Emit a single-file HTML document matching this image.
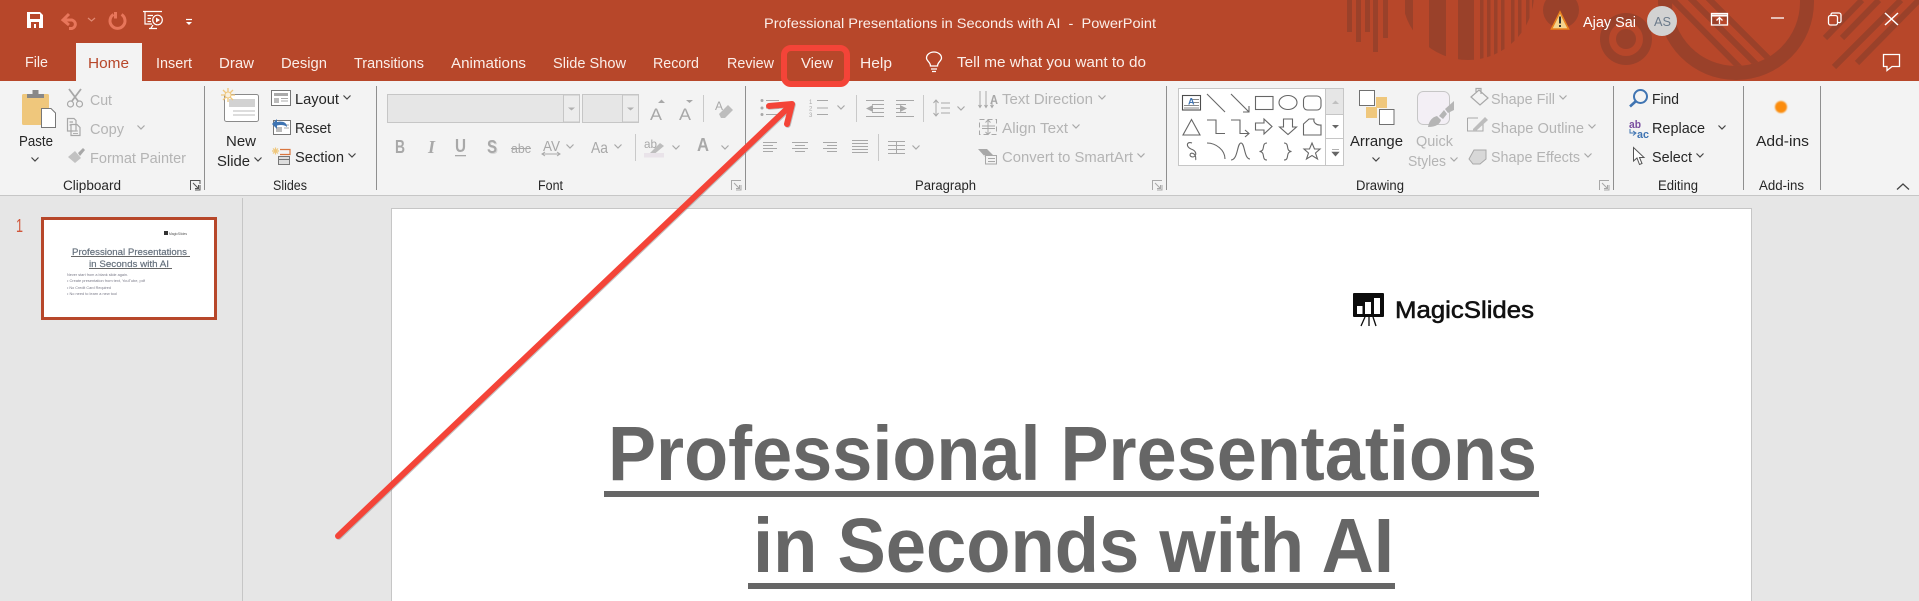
<!DOCTYPE html>
<html><head><meta charset="utf-8"><title>Professional Presentations in Seconds with AI - PowerPoint</title>
<style>
html,body{margin:0;padding:0;background:#e6e6e6;overflow:hidden}
svg{display:block}
text{font-family:"Liberation Sans",sans-serif;white-space:pre}
.t{font-size:14.5px;fill:#262626}
.w{font-size:14.5px;fill:#fbeee9}
.g{font-size:14.5px;fill:#b4b4b4}
.l{font-size:13.5px;fill:#262626}
.ch{fill:none;stroke:#444;stroke-width:1.2}
.cg{fill:none;stroke:#a8a8a8;stroke-width:1.2}
.ic{fill:none;stroke:#a8a8a8;stroke-width:1.2}
.sh{fill:none;stroke:#666;stroke-width:1.1}
</style></head><body>
<svg xmlns="http://www.w3.org/2000/svg" width="1919" height="601" viewBox="0 0 1919 601">
<defs>
<path id="c" d="M-3.5 -1.5L0 2L3.5 -1.5"/>
<clipPath id="top"><rect x="0" y="0" width="1919" height="81"/></clipPath>
<clipPath id="disc"><circle cx="1468" cy="-6" r="66"/></clipPath>
<clipPath id="ringIn"><circle cx="1736" cy="2" r="64"/></clipPath>
<filter id="soft" x="-50%" y="-50%" width="200%" height="200%"><feGaussianBlur stdDeviation="0.8"/></filter>
<g id="lau"><path d="M0.5 10V0.5H10M10 5V10H5M3 3L8.500 8.500M8.500 5V8.500H5" fill="none" stroke="#a8a8a8" stroke-width="1"/></g>
<g id="lad"><path d="M0.500 10V0.500H10V4M10 5V10H5M3 3L8.500 8.500M8.500 5V8.500H5" fill="none" stroke="#555" stroke-width="1"/></g>
</defs>

<!-- backgrounds -->
<rect width="1919" height="601" fill="#e6e6e6"/>
<rect width="1919" height="81" fill="#b7472a"/>
<rect y="81" width="1919" height="114" fill="#f3f3f3"/>
<rect y="195" width="1919" height="1" fill="#c6c6c6"/>
<rect x="242" y="198" width="1" height="403" fill="#c6c6c6"/>

<!-- title-bar decoration -->
<g clip-path="url(#top)" fill="#9a412a" stroke="none">
<rect x="1347" y="0" width="5" height="32"/><rect x="1356" y="0" width="5" height="42"/><rect x="1365" y="0" width="5" height="32"/><rect x="1373" y="0" width="5" height="52"/><rect x="1383" y="0" width="5" height="38"/>
<g clip-path="url(#disc)">
<rect x="1405" y="0" width="8" height="40"/><rect x="1429" y="0" width="17" height="70"/><rect x="1458" y="0" width="16" height="70"/>
<rect x="1480" y="0" width="3.500" height="70"/><rect x="1487" y="0" width="3.500" height="70"/><rect x="1494" y="0" width="3.500" height="70"/><rect x="1501" y="0" width="3.500" height="70"/><rect x="1511" y="0" width="3.500" height="70"/><rect x="1518" y="0" width="3.500" height="70"/><rect x="1526" y="0" width="3.500" height="70"/><rect x="1532" y="0" width="2.500" height="70"/>
</g>
<circle cx="1561" cy="10" r="18"/>
<path fill-rule="evenodd" d="M1600 39a26 26 0 1 0 52 0a26 26 0 1 0-52 0zM1609 39a17 17 0 1 1 34 0a17 17 0 1 1-34 0z"/>
<circle cx="1626" cy="39" r="10"/>
<path fill-rule="evenodd" d="M1658 2a78 78 0 1 0 156 0a78 78 0 1 0-156 0zM1672 2a64 64 0 1 1 128 0a64 64 0 1 1-128 0z"/>
<g clip-path="url(#ringIn)" stroke="#9a412a" stroke-width="6" fill="none">
<path d="M1672 -1L1750 78M1686 -6L1766 74M1702 -8L1782 72"/>
</g>
<g stroke="#9a412a" stroke-width="6" fill="none">
<path d="M1825 38L1862 0M1842 38L1879 0M1834 67L1901 0M1857 63L1919 0"/>
</g>
</g>

<!-- quick access -->
<path fill="#fff" fill-rule="evenodd" d="M27 12H40L43 15V28H27ZM30 14V19H40V14ZM31 22V28H34V24H36V28H39V22Z"/>
<g fill="none" stroke="#e8765b" stroke-width="3">
<path d="M63 20H72A5 4.500 0 0 1 72 28.500H69"/><path d="M69 14L63 20L69 25"/>
<path d="M121.500 14.500A7.500 7.500 0 1 1 113.500 14.500"/><path d="M115.500 12V18.500"/>
</g>
<path d="M88 18L91.500 21L95 18" fill="none" stroke="#e08a74" stroke-width="1.200"/>
<g fill="none" stroke="#fff" stroke-width="1.200">
<path d="M143 11.500H162M145 12V24H152M147.500 15.500H153M147.500 18.500H151M147.500 21.500H151M149 28.500H157M151 28L153 25"/>
<circle cx="157.500" cy="20" r="4.800"/>
</g>
<path d="M156 17.500L160 20L156 22.500Z" fill="#fff"/>
<path d="M186 19.500H192" stroke="#fff" stroke-width="1.200"/><path d="M186 22H192L189 25Z" fill="#fff"/>

<!-- title -->
<text x="764" y="28" font-size="14" fill="#fbeee9" textLength="392" lengthAdjust="spacingAndGlyphs">Professional Presentations in Seconds with AI  -  PowerPoint</text>

<!-- top right -->
<path d="M1560 12L1568.500 29H1551.500Z" fill="#f4d48e" stroke="#e8821e" stroke-width="1.600"/>
<rect x="1559" y="16.500" width="2" height="7" fill="#333"/><rect x="1559" y="25" width="2" height="2" fill="#333"/>
<text x="1583" y="27" font-size="15" fill="#fff" textLength="53" lengthAdjust="spacingAndGlyphs">Ajay Sai</text>
<circle cx="1662" cy="21" r="15" fill="#d2d2d2"/>
<text x="1654" y="26" font-size="13" fill="#6b7a8a" textLength="17" lengthAdjust="spacingAndGlyphs">AS</text>
<g fill="none" stroke="#fff" stroke-width="1.300">
<rect x="1711.500" y="13.500" width="16" height="11.500"/><path d="M1711 15.500H1728" stroke-width="2"/><path d="M1719.500 24V18M1716.500 20.500L1719.500 17.500L1722.500 20.500"/>
<path d="M1771 18H1784"/>
<rect x="1828.500" y="15.500" width="9" height="9.500" rx="2"/><path d="M1831 15V14.500A1.500 1.500 0 0 1 1832.500 13H1839A2 2 0 0 1 1841 15V21A1.500 1.500 0 0 1 1839 22.500H1838"/>
<path d="M1885 13L1898 25M1898 13L1885 25" stroke-width="1.500"/>
<path d="M1883.500 54.500H1899.500V66.500H1892L1887 70.500V66.500H1883.500Z"/>
</g>

<!-- tabs -->
<rect x="76" y="43" width="66" height="38" fill="#f3f3f3"/>
<text class="w" x="25" y="67" textLength="23" lengthAdjust="spacingAndGlyphs">File</text>
<text x="88" y="68" font-size="14.500" fill="#b7472a" textLength="41" lengthAdjust="spacingAndGlyphs">Home</text>
<text class="w" x="156" y="68" textLength="36" lengthAdjust="spacingAndGlyphs">Insert</text>
<text class="w" x="219" y="68" textLength="35" lengthAdjust="spacingAndGlyphs">Draw</text>
<text class="w" x="281" y="68" textLength="46" lengthAdjust="spacingAndGlyphs">Design</text>
<text class="w" x="354" y="68" textLength="70" lengthAdjust="spacingAndGlyphs">Transitions</text>
<text class="w" x="451" y="68" textLength="75" lengthAdjust="spacingAndGlyphs">Animations</text>
<text class="w" x="553" y="68" textLength="73" lengthAdjust="spacingAndGlyphs">Slide Show</text>
<text class="w" x="653" y="68" textLength="46" lengthAdjust="spacingAndGlyphs">Record</text>
<text class="w" x="727" y="68" textLength="47" lengthAdjust="spacingAndGlyphs">Review</text>
<text class="w" x="801" y="68" textLength="32" lengthAdjust="spacingAndGlyphs">View</text>
<text class="w" x="860" y="68" textLength="32" lengthAdjust="spacingAndGlyphs">Help</text>
<g fill="none" stroke="#fff" stroke-width="1.300">
<path d="M930.500 66C930.500 62 926.500 61 926.500 58A7.500 6 0 0 1 941.500 58C941.500 61 937.500 62 937.500 66Z"/>
<path d="M931 69H937M932 71.500H936"/>
</g>
<text class="w" x="957" y="67" textLength="189" lengthAdjust="spacingAndGlyphs">Tell me what you want to do</text>

<!-- ribbon separators -->
<g fill="#8f8f8f">
<rect x="204" y="86" width="1" height="104"/><rect x="376" y="86" width="1" height="104"/><rect x="745" y="86" width="1" height="104"/><rect x="1166" y="86" width="1" height="104"/><rect x="1613" y="86" width="1" height="104"/><rect x="1743" y="86" width="1" height="104"/><rect x="1820" y="86" width="1" height="104"/>
</g>

<!-- group labels -->
<text class="l" x="63" y="190" textLength="58" lengthAdjust="spacingAndGlyphs">Clipboard</text>
<text class="l" x="273" y="190" textLength="34" lengthAdjust="spacingAndGlyphs">Slides</text>
<text class="l" x="538" y="190" textLength="25" lengthAdjust="spacingAndGlyphs">Font</text>
<text class="l" x="915" y="190" textLength="61" lengthAdjust="spacingAndGlyphs">Paragraph</text>
<text class="l" x="1356" y="190" textLength="48" lengthAdjust="spacingAndGlyphs">Drawing</text>
<text class="l" x="1658" y="190" textLength="40" lengthAdjust="spacingAndGlyphs">Editing</text>
<text class="l" x="1759" y="190" textLength="45" lengthAdjust="spacingAndGlyphs">Add-ins</text>
<use href="#lad" x="190" y="180"/>
<use href="#lau" x="731" y="180"/>
<use href="#lau" x="1152" y="180"/>
<use href="#lau" x="1599" y="180"/>
<path d="M1897 189.500L1903 184L1909 189.500" fill="none" stroke="#444" stroke-width="1.300"/>

<!-- clipboard -->
<rect x="22" y="94" width="27" height="31" rx="1.500" fill="#efc77c"/>
<path d="M27 98V94H32.500V90H38.500V94H44V98Z" fill="#888"/>
<path d="M41.500 108.500H51L55.500 113V127.500H41.500Z" fill="#fff" stroke="#777"/>
<text class="t" x="19" y="146" textLength="34" lengthAdjust="spacingAndGlyphs">Paste</text>
<use href="#c" class="ch" x="35" y="159"/>
<g class="ic" stroke="#b0b0b0">
<circle cx="70.500" cy="104" r="3"/><circle cx="79.500" cy="104" r="3"/>
<path d="M72 101L81 89M78 101L69 89" stroke-width="1.800"/>
<path d="M67.500 118.500H74L76 120.500V131H67.500Z M71 124.500H77L80 127.500V135.500H71Z M69.500 122H73M69.500 125H71"/>
</g>
<path d="M73 131H78M73 133.500H78" stroke="#b0b0b0"/>
<text class="g" x="90" y="105" textLength="22" lengthAdjust="spacingAndGlyphs">Cut</text>
<text class="g" x="90" y="134" textLength="34" lengthAdjust="spacingAndGlyphs">Copy</text>
<use href="#c" class="cg" x="141" y="127"/>
<path d="M68 157L75 151L81 158L75 163Z" fill="#c2c2c2"/><path d="M78 153L83 148L85 150L80 156Z" fill="#a8a8a8"/>
<text class="g" x="90" y="163" textLength="96" lengthAdjust="spacingAndGlyphs">Format Painter</text>

<!-- slides -->
<rect x="224.500" y="94.500" width="34" height="27" rx="2" fill="#fff" stroke="#8a8a8a"/>
<rect x="229" y="99" width="26" height="8" fill="#d2d2d2"/>
<path d="M233 111H255M233 115H255" stroke="#bbb"/>
<path d="M228 88V102M221 95H235M223 90L233 100M233 90L223 100" stroke="#efc77c" stroke-width="1.300"/>
<circle cx="228" cy="95" r="3" fill="#f8f0de" stroke="#efc77c"/>
<text class="t" x="226" y="146" textLength="30" lengthAdjust="spacingAndGlyphs">New</text>
<text class="t" x="217" y="166" textLength="33" lengthAdjust="spacingAndGlyphs">Slide</text>
<use href="#c" class="ch" x="258" y="159"/>
<rect x="271.500" y="90.500" width="19" height="15" fill="#fff" stroke="#777"/>
<rect x="274" y="93" width="14" height="3" fill="#aaa"/><rect x="274" y="98" width="5" height="5" fill="#bbb"/><path d="M281 98.500H288M281 101H288" stroke="#aaa"/>
<text class="t" x="295" y="104" textLength="44" lengthAdjust="spacingAndGlyphs">Layout</text>
<use href="#c" class="ch" x="347" y="97"/>
<rect x="273.500" y="120.500" width="17" height="14" fill="#fff" stroke="#777"/>
<rect x="276" y="127" width="6" height="5" fill="#bbb"/><path d="M284 125H289M284 128H289" stroke="#aaa"/>
<path d="M272 124L277 119V122C282 121 287 122 287 127C285 125 281 124.500 277 125.500V129Z" fill="#3f74b2"/>
<text class="t" x="295" y="133" textLength="36" lengthAdjust="spacingAndGlyphs">Reset</text>
<path d="M272 151H279M275.500 147.500V154.500M273 148.500L278 153.500M278 148.500L273 153.500" stroke="#efc77c" stroke-width="1.200"/>
<path d="M280 149.500H290V154.500H280" fill="none" stroke="#d9763f" stroke-width="1.200"/>
<rect x="278.500" y="156.500" width="11" height="8" fill="#ddd" stroke="#777"/><path d="M279 159.500H289" stroke="#777"/>
<text class="t" x="295" y="162" textLength="49" lengthAdjust="spacingAndGlyphs">Section</text>
<use href="#c" class="ch" x="352" y="155"/>

<!-- font -->
<g stroke="#c6c6c6" fill="#e6e6e6">
<rect x="387.500" y="94.500" width="192" height="28"/><rect x="582.500" y="94.500" width="56" height="28"/>
<rect x="563.500" y="95" width="16" height="27" fill="#ececec"/><rect x="622.500" y="95" width="16" height="27" fill="#ececec"/>
</g>
<path d="M568 107.500H575L571.500 110.500ZM627 107.500H634L630.500 110.500Z" fill="#b0b0b0"/>
<text x="650" y="120" font-size="17" fill="#a8a8a8" textLength="12" lengthAdjust="spacingAndGlyphs">A</text>
<text x="679" y="120" font-size="17" fill="#a8a8a8" textLength="12" lengthAdjust="spacingAndGlyphs">A</text>
<path d="M658 103H665L661.500 99.500Z M686 100H693L689.500 103Z" fill="#a8a8a8"/>
<rect x="703" y="95" width="1" height="27" fill="#c9c9c9"/>
<text x="715" y="110" font-size="12" fill="#a8a8a8">A</text>
<path d="M719 114L728 105L733 110L725 118H721Z" fill="#bdbdbd"/>
<g font-size="18" fill="#a8a8a8">
<text x="395" y="153" font-weight="bold" textLength="10" lengthAdjust="spacingAndGlyphs">B</text>
<text x="428" y="153" font-weight="bold" style="font-family:'Liberation Serif',serif;font-style:italic">I</text>
<text x="455" y="152" font-weight="bold" textLength="11" lengthAdjust="spacingAndGlyphs">U</text>
<text x="488" y="154" font-weight="bold" fill="#d6d6d6" textLength="10" lengthAdjust="spacingAndGlyphs">S</text>
<text x="487" y="153" font-weight="bold" textLength="10" lengthAdjust="spacingAndGlyphs">S</text>
</g>
<rect x="455" y="155" width="11" height="1.300" fill="#a8a8a8"/>
<text x="511" y="153" font-size="13" fill="#a8a8a8" textLength="20" lengthAdjust="spacingAndGlyphs">abc</text>
<rect x="511" y="148" width="20" height="1" fill="#a8a8a8"/>
<text x="543" y="151" font-size="15" fill="#a8a8a8" textLength="17" lengthAdjust="spacingAndGlyphs">AV</text>
<path d="M542 154H560M545 152L542 154L545 156M557 152L560 154L557 156" fill="none" stroke="#a8a8a8"/>
<use href="#c" class="cg" x="570" y="146"/>
<text x="591" y="153" font-size="16" fill="#a8a8a8" textLength="17" lengthAdjust="spacingAndGlyphs">Aa</text>
<use href="#c" class="cg" x="618" y="146"/>
<rect x="635" y="134" width="1" height="27" fill="#c9c9c9"/>
<text x="644" y="148" font-size="12" fill="#a8a8a8" textLength="13" lengthAdjust="spacingAndGlyphs">ab</text>
<path d="M648 155L660 143L664 146L652 156Z" fill="#bdbdbd"/>
<rect x="644" y="153" width="20" height="4.500" fill="#e9e3e9"/>
<use href="#c" class="cg" x="676" y="147"/>
<text x="697" y="151" font-size="18" font-weight="bold" fill="#a8a8a8" textLength="12" lengthAdjust="spacingAndGlyphs">A</text>
<use href="#c" class="cg" x="725" y="147"/>

<!-- paragraph -->
<g stroke="#a8a8a8" fill="none">
<path d="M766 100.500H779M766 108H779M766 114.500H779"/>
<path d="M817 100.500H828M817 108H828M817 114.500H828"/>
<path d="M866 100.500H884M872 104.500H884M872 108.500H884M872 112.500H884M866 116.500H884"/>
<path d="M896 100.500H914M896 104.500H906M896 108.500H906M896 112.500H906M896 116.500H914"/>
<path d="M941 103H950M941 108H950M941 113H950M936 100V116M933.500 103L936 100L938.500 103M933.500 113L936 116L938.500 113"/>
<path d="M763 142.500H777M763 145.500H773M763 148.500H777M763 151.500H773"/>
<path d="M792 142.500H808M795 145.500H805M792 148.500H808M795 151.500H805"/>
<path d="M823 142.500H837M827 145.500H837M823 148.500H837M827 151.500H837"/>
<path d="M852 140.500H868M852 143.500H868M852 146.500H868M852 149.500H868M852 152.500H868"/>
<path d="M888 141.500H905M888 145.500H905M888 149.500H905M888 153.500H905M896.500 141V154"/>
</g>
<path d="M873 105L866 108.500L873 112ZM900 105L907 108.500L900 112Z" fill="#a8a8a8"/>
<circle cx="762" cy="100.500" r="1.500" fill="#a8a8a8"/><circle cx="762" cy="108" r="1.500" fill="#a8a8a8"/><circle cx="762" cy="114.500" r="1.500" fill="#a8a8a8"/>
<text x="809" y="104" font-size="6" fill="#a8a8a8">1</text><text x="809" y="110.500" font-size="6" fill="#a8a8a8">2</text><text x="809" y="117" font-size="6" fill="#a8a8a8">3</text>
<use href="#c" class="cg" x="841" y="107"/>
<rect x="856" y="95" width="1" height="27" fill="#c9c9c9"/>
<rect x="923" y="95" width="1" height="27" fill="#c9c9c9"/>
<use href="#c" class="cg" x="961" y="108"/>
<rect x="878" y="134" width="1" height="27" fill="#c9c9c9"/>
<use href="#c" class="cg" x="916" y="147"/>
<g stroke="#a8a8a8" fill="none">
<path d="M980 91V107M986 91V107M992 100V107M978.500 105L980 107.500L981.500 105M984.500 105L986 107.500L987.500 105M990.500 105L992 107.500L993.500 105"/>
<rect x="979.500" y="119.500" width="17" height="15" stroke-dasharray="5 3"/>
<path d="M982 126H995M982 128.500H995M988 120V134M985.500 122.500L988 120L990.500 122.500M985.500 132L988 134.500L990.500 132"/>
<rect x="985.500" y="155.500" width="11" height="8.500"/><path d="M988 158.500H995M988 161.500H995"/>
</g>
<text x="990" y="104" font-size="13" fill="#a8a8a8" textLength="8" lengthAdjust="spacingAndGlyphs" font-weight="bold">A</text>
<path d="M978 149H987L993 155H984L987 159Z" fill="#a8a8a8"/>
<text class="g" x="1002" y="104" textLength="91" lengthAdjust="spacingAndGlyphs">Text Direction</text>
<use href="#c" class="cg" x="1102" y="97"/>
<text class="g" x="1002" y="133" textLength="66" lengthAdjust="spacingAndGlyphs">Align Text</text>
<use href="#c" class="cg" x="1076" y="126"/>
<text class="g" x="1002" y="162" textLength="131" lengthAdjust="spacingAndGlyphs">Convert to SmartArt</text>
<use href="#c" class="cg" x="1141" y="155"/>

<!-- shape gallery -->
<rect x="1178.500" y="88.500" width="165" height="77" fill="#fff" stroke="#c6c6c6"/>
<rect x="1325.500" y="88.500" width="18" height="26" fill="#e6e6e6" stroke="#c6c6c6"/>
<path d="M1325.500 88V166M1325.500 138.500H1343" stroke="#c6c6c6" fill="none"/>
<path d="M1332 104H1339L1335.500 100.500Z" fill="#c0c0c0"/>
<path d="M1332 125H1339L1335.500 128.500Z" fill="#666"/>
<path d="M1332 149.500H1339M1332 152H1339L1335.500 156Z" fill="#666" stroke="#666" stroke-width=".6"/>
<g class="sh">
<rect x="1182.500" y="95.500" width="18" height="14.500" stroke="#4d4d4d"/>
<path d="M1191 99.500H1199M1191 102.500H1199M1184 105.500H1199M1184 108H1199" stroke="#888"/>
<path d="M1207 94L1225 112"/>
<path d="M1231 94L1249 112M1249 106V112H1243"/>
<rect x="1255.500" y="96.500" width="17.500" height="13"/>
<ellipse cx="1288" cy="102.500" rx="9" ry="7"/>
<rect x="1303.500" y="96" width="17.500" height="14" rx="4"/>
<path d="M1191.500 119.500L1200 135H1183Z"/>
<path d="M1207 120H1216V133.500H1225"/>
<path d="M1231 120H1240V133.500H1248.500M1245 130L1249 133.500L1245 137"/>
<path d="M1255.500 123H1264V119L1272 126.500L1264 134V130H1255.500Z"/>
<path d="M1283.500 119H1292.500V127H1296.500L1288 134.500L1279.500 127H1283.500Z"/>
<path d="M1303.500 124L1309 119H1314A6 5 0 0 0 1321 125V135H1303.500Z"/>
<path d="M1192 143C1186 141 1186 147 1191 149C1197 151 1197 156 1193 157C1188 157 1190 151 1194 154C1197 157 1195 159 1196 160"/>
<path d="M1207 143C1216 143 1225 150 1225 159"/>
<path d="M1231 160C1238 160 1237 143 1241 143C1245 143 1244 159 1250 159"/>
<path d="M1267 143C1261 143 1266 151 1259.500 151.500C1266 152 1261 160 1267 160"/>
<path d="M1284 143C1290 143 1285 151 1291.500 151.500C1285 152 1290 160 1284 160"/>
<path d="M1312 143L1314.500 149H1320L1315.500 153L1317.500 159L1312 155.500L1306.500 159L1308.500 153L1304 149H1309.500Z"/>
</g>
<text x="1188" y="104.500" font-size="9" font-weight="bold" fill="#3f74b2">A</text>

<!-- arrange -->
<rect x="1376" y="97" width="11" height="11" fill="#efc77c"/><rect x="1366" y="107" width="11" height="11" fill="#efc77c"/>
<rect x="1359.500" y="90.500" width="15" height="15" fill="#fff" stroke="#707070"/>
<rect x="1379.500" y="109.500" width="14.500" height="15" fill="#fff" stroke="#707070"/>
<text class="t" x="1350" y="146" textLength="53" lengthAdjust="spacingAndGlyphs">Arrange</text>
<use href="#c" class="ch" x="1376" y="159"/>
<rect x="1417.500" y="91.500" width="32" height="33" rx="6" fill="#f3eff5" stroke="#c6c6c6"/>
<path d="M1428 127C1429 120 1433 117 1437 116L1441 120C1440 124 1436 127 1428 127Z" fill="#b5b5b5"/>
<path d="M1439 116L1444 110L1447 114L1443 119Z" fill="#b5b5b5"/><path d="M1445 109L1454 101V110L1448 113Z" fill="#b5b5b5"/>
<text class="g" x="1416" y="146" textLength="37" lengthAdjust="spacingAndGlyphs">Quick</text>
<text class="g" x="1408" y="166" textLength="38" lengthAdjust="spacingAndGlyphs">Styles</text>
<use href="#c" class="cg" x="1454" y="159"/>
<path d="M1471 97L1479 90L1488 98L1480 105Z M1476 92V88.500H1481V94" fill="none" stroke="#a8a8a8" stroke-width="1.200"/>
<path d="M1467.500 118H1478M1467.500 118V131H1483V124" fill="none" stroke="#a8a8a8"/>
<path d="M1473 129L1485 117L1488 120L1476 131H1473Z" fill="#bdbdbd"/>
<path d="M1469 159L1474 150H1486V159L1480 164H1473Z" fill="#d8d8d8" stroke="#a8a8a8"/>
<text class="g" x="1491" y="104" textLength="64" lengthAdjust="spacingAndGlyphs">Shape Fill</text>
<use href="#c" class="cg" x="1563" y="97"/>
<text class="g" x="1491" y="133" textLength="93" lengthAdjust="spacingAndGlyphs">Shape Outline</text>
<use href="#c" class="cg" x="1592" y="126"/>
<text class="g" x="1491" y="162" textLength="89" lengthAdjust="spacingAndGlyphs">Shape Effects</text>
<use href="#c" class="cg" x="1588" y="155"/>

<!-- editing -->
<circle cx="1640.500" cy="96.500" r="6.500" fill="none" stroke="#3f74b2" stroke-width="2"/>
<path d="M1635.500 101.500L1630 106.500" stroke="#3f74b2" stroke-width="2.600"/>
<text class="t" x="1652" y="104" textLength="27" lengthAdjust="spacingAndGlyphs">Find</text>
<text x="1629" y="128" font-size="11" font-weight="bold" fill="#7a4fa0" textLength="12" lengthAdjust="spacingAndGlyphs">ab</text>
<text x="1637" y="138" font-size="11" font-weight="bold" fill="#3f74b2" textLength="12" lengthAdjust="spacingAndGlyphs">ac</text>
<path d="M1630 129V133H1635M1633 131L1636 133L1633 135.500" fill="none" stroke="#3f74b2"/>
<text class="t" x="1652" y="133" textLength="53" lengthAdjust="spacingAndGlyphs">Replace</text>
<use href="#c" class="ch" x="1722" y="127"/>
<path d="M1633.500 147.500V161L1637 158L1639.500 164.500L1642 163.500L1639.500 157.500H1644Z" fill="#fff" stroke="#555"/>
<text class="t" x="1652" y="162" textLength="40" lengthAdjust="spacingAndGlyphs">Select</text>
<use href="#c" class="ch" x="1700" y="155"/>
<circle cx="1781" cy="107" r="6" fill="#fb8c0c" filter="url(#soft)"/>
<text class="t" x="1756" y="146" textLength="53" lengthAdjust="spacingAndGlyphs">Add-ins</text>

<!-- thumbnail pane -->
<text x="16" y="232" font-size="18" fill="#d0563a" textLength="7" lengthAdjust="spacingAndGlyphs">1</text>
<rect x="42.500" y="218.500" width="173" height="100" fill="#fff" stroke="#b7472a" stroke-width="3"/>
<rect x="164" y="231" width="4" height="4" fill="#333"/>
<text x="169" y="235" font-size="4" fill="#555" textLength="18" lengthAdjust="spacingAndGlyphs">MagicSlides</text>
<text x="72" y="255" font-size="9.500" fill="#67727e" stroke="#67727e" stroke-width=".2" textLength="115" lengthAdjust="spacingAndGlyphs">Professional Presentations</text>
<rect x="71" y="256" width="119" height="1" fill="#666"/>
<text x="89" y="267" font-size="9.500" fill="#67727e" stroke="#67727e" stroke-width=".2" textLength="80" lengthAdjust="spacingAndGlyphs">in Seconds with AI</text>
<rect x="89" y="268" width="83" height="1" fill="#666"/>
<g font-size="3.600" fill="#7a7a88">
<text x="67" y="276" textLength="61" lengthAdjust="spacingAndGlyphs">Never start from a blank slide again.</text>
<text x="67" y="282" textLength="78" lengthAdjust="spacingAndGlyphs">• Create presentation from text, YouTube, pdf</text>
<text x="67" y="289" textLength="44" lengthAdjust="spacingAndGlyphs">• No Credit Card Required</text>
<text x="67" y="295" textLength="50" lengthAdjust="spacingAndGlyphs">• No need to learn a new tool</text>
</g>

<!-- slide -->
<rect x="391.500" y="208.500" width="1360" height="400" fill="#fff" stroke="#c6c6c6"/>
<rect x="1353" y="293" width="31" height="24" rx="1" fill="#0c0c0c"/>
<rect x="1357" y="306" width="5.500" height="8" fill="#fff"/><rect x="1365" y="302" width="6" height="12" fill="#fff"/><rect x="1374" y="298" width="6" height="16" fill="#fff"/>
<path d="M1365 317L1361 326M1369 317V326M1373 317L1376 326" stroke="#0c0c0c" stroke-width="1.300"/>
<text x="1395" y="318" font-size="24.500" fill="#111" stroke="#111" stroke-width=".6" textLength="139" lengthAdjust="spacingAndGlyphs">MagicSlides</text>
<text x="608" y="480" font-size="77" font-weight="bold" fill="#666" textLength="929" lengthAdjust="spacingAndGlyphs">Professional Presentations</text>
<rect x="604" y="491" width="935" height="6" fill="#666"/>
<text x="753" y="572" font-size="77" font-weight="bold" fill="#666" textLength="641" lengthAdjust="spacingAndGlyphs">in Seconds with AI</text>
<rect x="748" y="583" width="647" height="6" fill="#666"/>

<!-- annotations -->
<rect x="784" y="48" width="63" height="36" rx="7" fill="none" stroke="#8a8a8a" stroke-width="1" transform="translate(0 1.500)" opacity=".45"/>
<rect x="784" y="48" width="63" height="36" rx="7" fill="none" stroke="#f44438" stroke-width="6"/>
<g fill="none" stroke-linecap="round" stroke-linejoin="round">
<path d="M338 536L792 104M769 106L792 104L787 124" stroke="#8a8a8a" stroke-width="6" transform="translate(.8 .8)" opacity=".5"/>
<path d="M338 536L792 104M769 106L792 104L787 124" stroke="#f44438" stroke-width="6"/>
</g>
</svg>
</body></html>
